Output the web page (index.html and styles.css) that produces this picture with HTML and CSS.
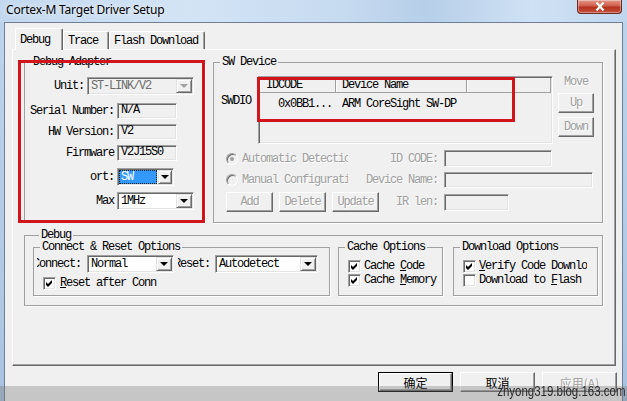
FILE: index.html
```html
<!DOCTYPE html>
<html lang="zh-CN">

<head>
    <meta charset="utf-8">
    <link rel="stylesheet" href="styles.css">
    <title>Cortex-M Target Driver Setup</title>
</head>

<body>
    <div class="window">
        <div class="titlebar">
            <span class="title">Cortex-M Target Driver Setup</span>
            <span class="close-btn">
                <svg width="14" height="9" viewBox="0 0 14 9">
                    <path d="M3.5 0.5 L10.5 8.5 M10.5 0.5 L3.5 8.5" stroke="#fff" stroke-width="2.2" />
                </svg>
            </span>
        </div>

        <div class="client">
            <div class="tabs">
                <span class="tab tab-active tab-debug">Debug</span>
                <span class="tab tab-trace">Trace</span>
                <span class="tab tab-flash">Flash Download</span>
            </div>

            <div class="panel">
                <div class="top-row">
                    <!-- adapter info -->
                    <fieldset class="group adapter">
                        <legend>Debug Adapter</legend>
                        <div class="arow unit-row">
                            <span class="alabel unit-label">Unit:</span>
                            <div class="combo combo-off unit-combo">
                                <span class="combo-value">ST-LINK/V2</span>
                                <span class="combo-arrow"></span>
                            </div>
                        </div>
                        <div class="arow serial-row">
                            <span class="alabel">Serial Number:</span>
                            <span class="edit edit-info">N/A</span>
                        </div>
                        <div class="arow info-row">
                            <span class="alabel">HW Version:</span>
                            <span class="edit edit-info">V2</span>
                        </div>
                        <div class="arow info-row">
                            <span class="alabel">Firmware</span>
                            <span class="edit edit-info">V2J15S0</span>
                        </div>
                        <div class="arow port-row">
                            <span class="alabel">ort:</span>
                            <div class="combo port-combo">
                                <span class="combo-value combo-focus">SW</span>
                                <span class="combo-arrow"></span>
                            </div>
                        </div>
                        <div class="arow max-row">
                            <span class="alabel">Max</span>
                            <div class="combo max-combo">
                                <span class="combo-value">1MHz</span>
                                <span class="combo-arrow"></span>
                            </div>
                        </div>
                    </fieldset>

                    <!-- detected chain -->
                    <fieldset class="group swdev">
                        <legend>SW Device</legend>
                        <div class="chain-row">
                            <span class="swdio">SWDIO</span>
                            <div class="listview">
                                <div class="lv-head">
                                    <span class="lv-col col-id">IDCODE</span>
                                    <span class="lv-col col-name">Device Name</span>
                                    <span class="lv-col col-rest"></span>
                                </div>
                                <div class="lv-row">
                                    <span class="lv-cell col-id cell-id">0x0BB1...</span>
                                    <span class="lv-cell col-name">ARM CoreSight SW-DP</span>
                                </div>
                            </div>
                            <div class="move-col">
                                <span class="move-label off">Move</span>
                                <span class="btn btn-move off">Up</span>
                                <span class="btn btn-move btn-down off">Down</span>
                            </div>
                        </div>

                        <div class="cfg-row cfg-first">
                            <div class="cfg-left">
                                <span class="radio-item off"><span class="radio radio-on"></span><span class="radio-text">Automatic Detection</span></span>
                                <span class="cfg-label off">ID CODE:</span>
                            </div>
                            <span class="edit edit-off edit-id"></span>
                        </div>
                        <div class="cfg-row cfg-second">
                            <div class="cfg-left">
                                <span class="radio-item off"><span class="radio"></span><span class="radio-text">Manual Configuration</span></span>
                                <span class="cfg-label off">Device Name:</span>
                            </div>
                            <span class="edit edit-off edit-name"></span>
                        </div>
                        <div class="cfg-row cfg-third">
                            <div class="cfg-left">
                                <span class="btn btn-small off">Add</span>
                                <span class="btn btn-small off">Delete</span>
                                <span class="btn btn-small off">Update</span>
                                <span class="cfg-label off">IR len:</span>
                            </div>
                            <span class="edit edit-off edit-ir"></span>
                        </div>
                    </fieldset>
                </div>

                <fieldset class="group debug">
                    <legend>Debug</legend>
                    <div class="debug-row">
                        <fieldset class="group sub connect">
                            <legend>Connect &amp; Reset Options</legend>
                            <div class="conn-row">
                                <span class="clip-label conn-label"><span>Connect:</span></span>
                                <div class="combo conn-combo">
                                    <span class="combo-value">Normal</span>
                                    <span class="combo-arrow"></span>
                                </div>
                                <span class="clip-label reset-label"><span>Reset:</span></span>
                                <div class="combo reset-combo">
                                    <span class="combo-value">Autodetect</span>
                                    <span class="combo-arrow"></span>
                                </div>
                            </div>
                            <div class="check-row conn-check">
                                <span class="check checked"></span><span><u>R</u>eset after Conn</span>
                            </div>
                        </fieldset>

                        <fieldset class="group sub cache">
                            <legend>Cache Options</legend>
                            <div class="check-list">
                                <div class="check-row"><span class="check checked"></span><span>Cache <u>C</u>ode</span></div>
                                <div class="check-row"><span class="check checked"></span><span>Cache <u>M</u>emory</span></div>
                            </div>
                        </fieldset>

                        <fieldset class="group sub download">
                            <legend>Download Options</legend>
                            <div class="check-list">
                                <div class="check-row"><span class="check checked"></span><span class="clip-text"><u>V</u>erify Code Download</span></div>
                                <div class="check-row"><span class="check"></span><span>Download to <u>F</u>lash</span></div>
                            </div>
                        </fieldset>
                    </div>
                </fieldset>
            </div>

            <div class="dlg-buttons">
                <span class="btn btn-dlg btn-default">确定</span>
                <span class="btn btn-dlg">取消</span>
                <span class="btn btn-dlg off">应用(<u>A</u>)</span>
            </div>
        </div>

        <!-- hand-drawn highlight frames -->
        <div class="mark mark-adapter"></div>
        <div class="mark mark-chain"></div>

        <div class="stamp"><span class="stamp-text">zhyong319.blog.163.com</span></div>
    </div>
</body>

</html>
```

FILE: styles.css
```css
*,
*:before,
*:after {
    box-sizing: border-box;
}

body {
    margin: 0;
    width: 627px;
    height: 401px;
    overflow: hidden;
    font-family: "Liberation Mono", "DejaVu Sans Mono", monospace;
    font-size: 12px;
    letter-spacing: -1.2px;
    color: #000;
}

.window {
    position: relative;
    width: 627px;
    height: 401px;
    background: linear-gradient(180deg, #bed4ec 0, #b3cbe6 60%, #a8c2df 100%);
}

/* ---- title bar ---- */
.titlebar {
    display: flex;
    justify-content: space-between;
    height: 22px;
    background: linear-gradient(90deg, #c3d8ef 0%, #d3e4f5 30%, #c6daf0 55%, #b7cfe9 68%, #cfe1f4 85%, #c0d6ee 100%);
}

.title {
    padding-left: 6px;
    font-family: "Noto Sans", "Liberation Sans", sans-serif;
    font-size: 12px;
    letter-spacing: -0.2px;
    line-height: 19px;
    color: #000;
    text-shadow: 0 0 6px #fff;
}

.close-btn {
    width: 45px;
    height: 14px;
    margin-right: 5px;
    display: flex;
    align-items: center;
    justify-content: center;
    border: 1px solid #6b2a22;
    border-top: none;
    border-radius: 0 0 4px 4px;
    background: linear-gradient(180deg, #e39a8c 0%, #cf5d4a 45%, #b3321f 55%, #c6513b 100%);
    box-shadow: inset 0 0 0 1px rgba(255, 255, 255, 0.35);
}

/* ---- dialog body ---- */
.client {
    margin-left: 4px;
    width: 619px;
    height: 379px;
    background: #f0f0f0;
    border: 1px solid #6c7f96;
    border-bottom: none;
}

.tabs {
    display: flex;
    align-items: flex-end;
    height: 26px;
    padding-left: 10px;
}

.tab {
    height: 18px;
    padding: 2px 0 0 4px;
    line-height: 15px;
    border-top: 1px solid #fff;
    border-left: 1px solid #fff;
    border-right: 1px solid #696969;
    border-radius: 2px 2px 0 0;
    box-shadow: inset -1px 0 0 #a0a0a0;
    background: #f0f0f0;
}

.tab-debug {
    width: 48px;
}

.tab-trace {
    width: 46px;
}

.tab-flash {
    width: 96px;
}

.tab-active {
    position: relative;
    z-index: 1;
    height: 22px;
    margin-bottom: -1px;
    padding-top: 4px;
}

.panel {
    margin-left: 7px;
    width: 604px;
    height: 317px;
    padding: 6px 0 0 11px;
    border-top: 1px solid #fff;
    border-left: 1px solid #fff;
    border-right: 1px solid #696969;
    border-bottom: 1px solid #696969;
    box-shadow: inset -1px -1px 0 #a0a0a0;
}

/* ---- group boxes ---- */
.group {
    margin: 0;
    padding: 0;
    min-width: 0;
    border: 1px solid #a0a0a0;
    box-shadow: 1px 1px 0 #fff;
}

.group>legend {
    margin-left: 6px;
    padding: 0 2px;
    line-height: 12px;
}

.top-row {
    display: flex;
}

.adapter {
    width: 181px;
    height: 166px;
}

.swdev {
    width: 390px;
    height: 167px;
    margin-left: 8px;
}

/* ---- generic controls ---- */
.edit {
    display: block;
    height: 16px;
    padding-left: 3px;
    line-height: 13px;
    white-space: nowrap;
    overflow: hidden;
    background: #f0f0f0;
    border: 1px solid;
    border-color: #a0a0a0 #fff #fff #a0a0a0;
    box-shadow: inset 1px 1px 0 #696969, inset -1px -1px 0 #e3e3e3;
}

.combo {
    display: flex;
    height: 18px;
    padding: 1px;
    background: #fff;
    border: 1px solid;
    border-color: #a0a0a0 #fff #fff #a0a0a0;
    box-shadow: inset 1px 1px 0 #696969, inset -1px -1px 0 #e3e3e3;
}

.combo-value {
    flex: 1;
    padding-left: 2px;
    line-height: 14px;
    white-space: nowrap;
    overflow: hidden;
}

.combo-arrow {
    width: 16px;
    display: flex;
    align-items: center;
    justify-content: center;
    background: #f0f0f0;
    border: 1px solid;
    border-color: #e3e3e3 #696969 #696969 #e3e3e3;
    box-shadow: inset 1px 1px 0 #fff, inset -1px -1px 0 #a0a0a0;
}

.combo-arrow:after {
    content: "";
    border-left: 4px solid transparent;
    border-right: 4px solid transparent;
    border-top: 4px solid #000;
}

.combo-off {
    background: #f0f0f0;
    color: #6d6d6d;
}

.combo-off .combo-arrow:after {
    border-top-color: #a0a0a0;
}

.combo-focus {
    flex: none;
    width: 38px;
    margin-right: 1px;
    color: #fff;
    background: #3399ff;
    outline: 1px dotted #1b1b1b;
    outline-offset: -1px;
}

.btn {
    display: flex;
    align-items: center;
    justify-content: center;
    height: 20px;
    background: #f0f0f0;
    border: 1px solid;
    border-color: #fff #696969 #696969 #fff;
    box-shadow: inset -1px -1px 0 #a0a0a0;
}

.off {
    color: #a0a0a0;
    text-shadow: 1px 1px 0 #fff;
}

/* ---- debug adapter ---- */
.arow {
    display: flex;
    align-items: center;
}

.alabel {
    width: 89px;
    margin-right: 3px;
    text-align: right;
    white-space: nowrap;
}

.unit-row {
    margin-top: 9px;
}

.unit-label {
    width: 59px;
}

.unit-combo {
    width: 107px;
}

.serial-row {
    margin-top: 8px;
}

.info-row {
    margin-top: 5px;
}

.edit-info {
    width: 60px;
}

.port-row {
    margin-top: 7px;
}

.port-combo {
    width: 57px;
}

.max-row {
    margin-top: 6px;
}

.max-combo {
    width: 77px;
}

/* ---- sw device ---- */
.chain-row {
    display: flex;
    margin-top: 8px;
}

.swdio {
    width: 44px;
    padding-left: 7px;
    margin-top: 18px;
    line-height: 14px;
}

.listview {
    width: 295px;
    height: 68px;
    padding: 1px;
    background: #f0f0f0;
    border: 1px solid;
    border-color: #a0a0a0 #fff #fff #a0a0a0;
    box-shadow: inset 1px 1px 0 #696969, inset -1px -1px 0 #e3e3e3;
}

.lv-head {
    display: flex;
    height: 15px;
    border-bottom: 1px solid #a0a0a0;
}

.lv-col {
    padding-left: 6px;
    line-height: 14px;
    border-right: 1px solid #a0a0a0;
    box-shadow: inset 1px 0 0 #fff;
}

.col-id {
    width: 76px;
}

.col-name {
    width: 131px;
}

.col-rest {
    width: 84px;
}

.lv-row {
    display: flex;
    height: 20px;
    line-height: 22px;
}

.lv-cell {
    padding-left: 6px;
    white-space: nowrap;
}

.cell-id {
    padding-left: 0;
    padding-right: 4px;
    text-align: right;
}

.move-col {
    display: flex;
    flex-direction: column;
    width: 36px;
    margin-left: 5px;
}

.move-label {
    text-align: center;
    line-height: 12px;
}

.btn-move {
    margin-top: 5px;
}

.btn-down {
    margin-top: 4px;
}

.cfg-row {
    display: flex;
    align-items: center;
    padding-left: 12px;
}

.cfg-first {
    margin-top: 6px;
    height: 17px;
}

.cfg-second {
    margin-top: 5px;
    height: 16px;
}

.cfg-third {
    margin-top: 4px;
    height: 20px;
}

.cfg-left {
    display: flex;
    align-items: center;
    width: 212px;
    margin-right: 6px;
}

.cfg-label {
    margin-left: auto;
    white-space: nowrap;
}

.radio-item {
    display: flex;
    align-items: center;
    width: 122px;
    overflow: hidden;
    white-space: nowrap;
}

.radio {
    flex: none;
    position: relative;
    width: 12px;
    height: 12px;
    margin-right: 4px;
    border-radius: 50%;
    background: #f0f0f0;
    border: 1px solid;
    border-color: #a0a0a0 #fff #fff #a0a0a0;
    box-shadow: inset 1px 1px 0 #696969;
}

.radio-on:after {
    content: "";
    position: absolute;
    left: 3px;
    top: 3px;
    width: 4px;
    height: 4px;
    border-radius: 50%;
    background: #a0a0a0;
}

.edit-off {
    height: 17px;
}

.edit-id {
    width: 108px;
}

.edit-name {
    width: 149px;
    height: 16px;
}

.edit-ir {
    width: 65px;
}

.btn-small {
    width: 47px;
    margin-right: 6px;
}

/* ---- debug options ---- */
.debug {
    width: 579px;
    height: 77px;
    margin-top: 6px;
    padding-left: 8px;
}

.debug-row {
    display: flex;
}

.sub {
    height: 55px;
}

.connect {
    width: 297px;
}

.cache {
    width: 105px;
    margin-left: 8px;
}

.download {
    width: 145px;
    margin-left: 10px;
}

.conn-row {
    display: flex;
    align-items: center;
    margin-top: 2px;
    padding-left: 3px;
}

.clip-label {
    display: flex;
    justify-content: flex-end;
    overflow: hidden;
    white-space: nowrap;
}

.conn-label {
    width: 44px;
}

.reset-label {
    width: 32px;
    margin-left: 4px;
}

.conn-combo {
    width: 87px;
    margin-left: 6px;
}

.reset-combo {
    width: 103px;
    margin-left: 5px;
}

.check-row {
    display: flex;
    align-items: center;
    height: 14px;
    white-space: nowrap;
}

.conn-check {
    margin-top: 3px;
    padding-left: 9px;
}

.conn-check .check {
    margin-right: 4px;
}

.check-list {
    margin-top: 6px;
    padding-left: 9px;
}

.check {
    flex: none;
    width: 13px;
    height: 13px;
    margin-right: 3px;
    background: #fff;
    border: 1px solid;
    border-color: #a0a0a0 #fff #fff #a0a0a0;
    box-shadow: inset 1px 1px 0 #696969, inset -1px -1px 0 #e3e3e3;
}

.checked {
    background: #fff url("data:image/svg+xml;utf8,<svg xmlns='http://www.w3.org/2000/svg' width='11' height='11'><polygon points='2,4 4,6 8,2 8,5 4,9 2,7' fill='black'/></svg>") no-repeat center;
}

.clip-text {
    width: 108px;
    overflow: hidden;
}

/* ---- OK / Cancel ---- */
.dlg-buttons {
    display: flex;
    justify-content: flex-end;
    gap: 7px;
    margin-top: 6px;
    padding-right: 5px;
}

.btn-dlg {
    width: 75px;
    font-family: "Noto Sans CJK SC", sans-serif;
    font-size: 12px;
    letter-spacing: 0;
}

.btn-default {
    outline: 1px solid #000;
    outline-offset: -1px;
    border-width: 2px;
    border-color: #fff #696969 #696969 #fff;
    box-shadow: inset -1px -1px 0 #a0a0a0;
}

/* ---- annotations ---- */
.mark {
    position: absolute;
    border: 3px solid #d2141c;
}

.mark-adapter {
    left: 18px;
    top: 60px;
    width: 187px;
    height: 163px;
}

.mark-chain {
    left: 257px;
    top: 77px;
    width: 258px;
    height: 45px;
}

.stamp {
    position: absolute;
    left: 0;
    bottom: 0;
    width: 627px;
    height: 15px;
    background: rgba(120, 120, 120, 0.35);
    overflow: hidden;
}

.stamp-text {
    position: absolute;
    right: 2px;
    top: -3px;
    font-family: "Liberation Sans", Arial, sans-serif;
    font-size: 14px;
    letter-spacing: 0;
    color: #2b2b2b;
    transform: scaleX(0.82);
    transform-origin: right center;
}
```
